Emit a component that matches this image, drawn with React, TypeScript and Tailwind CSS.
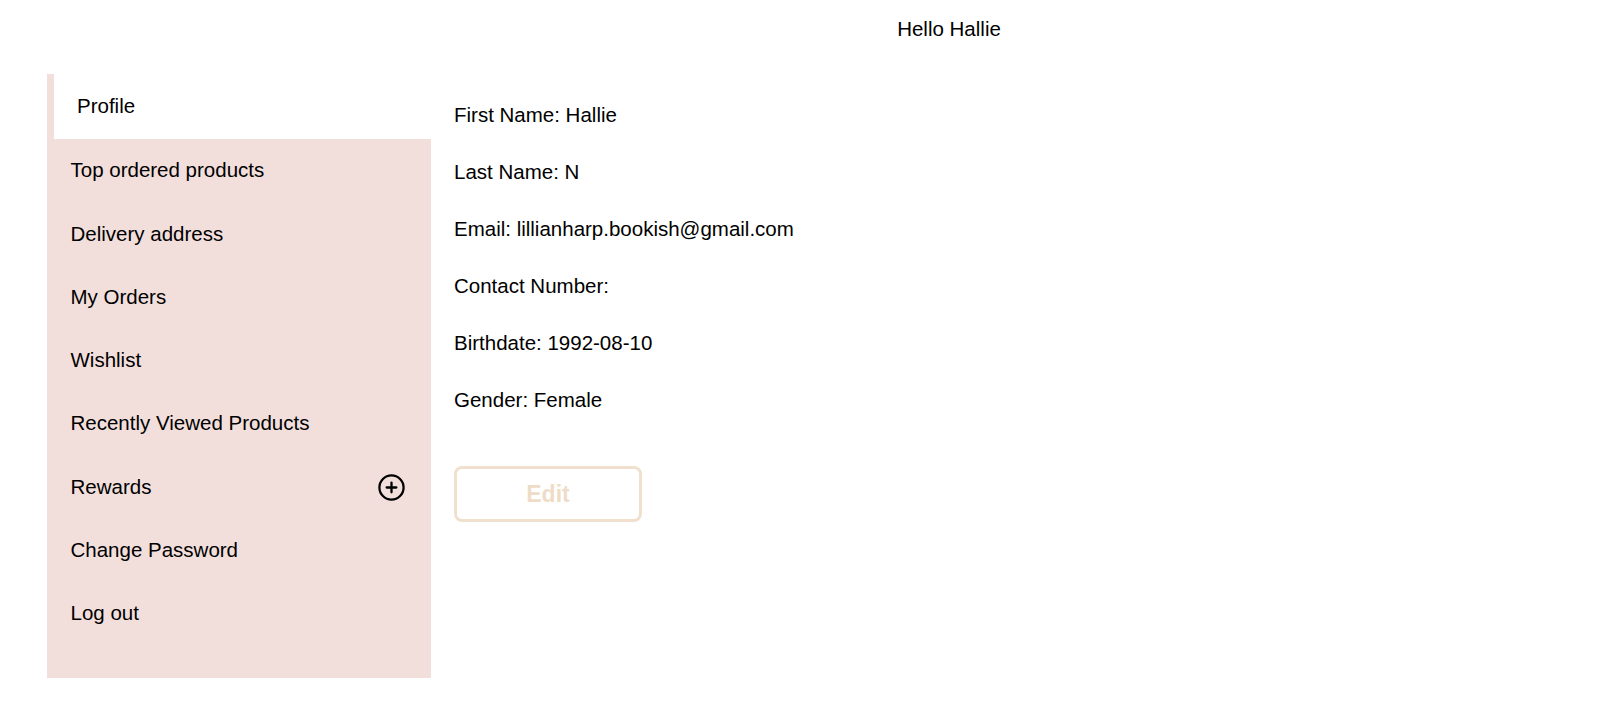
import { CirclePlus } from "lucide-react";

const menu = [
  "Top ordered products",
  "Delivery address",
  "My Orders",
  "Wishlist",
  "Recently Viewed Products",
  "Rewards",
  "Change Password",
  "Log out",
];

const details = [
  "First Name: Hallie",
  "Last Name: N",
  "Email: lillianharp.bookish@gmail.com",
  "Contact Number:",
  "Birthdate: 1992-08-10",
  "Gender: Female",
];

export default function App() {
  return (
    <div className="min-h-screen bg-white text-black font-['Liberation_Sans',Arial,sans-serif]">
      {/* Header */}
      <header className="h-[74px] pl-[298px] flex justify-center pt-[17px]">
        <p className="text-[20.5px] leading-6">Hello Hallie</p>
      </header>

      <div className="flex">
        {/* Sidebar */}
        <nav className="ml-[47px] w-[384px] bg-[#f2dfdc] pb-[33px]">
          <div className="ml-[7px] h-[65px] bg-white flex items-center pl-[23px] text-[20.5px]">
            Profile
          </div>
          {menu.map((item) => (
            <div
              key={item}
              className="h-[63.3px] flex items-center justify-between pl-[23.5px] pr-[25px] text-[20.5px]"
            >
              <span>{item}</span>
              {item === "Rewards" && (
                <CirclePlus size={29} strokeWidth={1.9} className="text-black" />
              )}
            </div>
          ))}
        </nav>

        {/* Profile details */}
        <main className="pl-[23px] pt-[12px]">
          {details.map((line) => (
            <p key={line} className="text-[20.5px] leading-[57.1px]">
              {line}
            </p>
          ))}
          <button className="mt-[37.5px] w-[188px] h-[56px] border-[3px] border-[#f1e0cd] rounded-lg text-[23px] font-bold text-[#efdcc7]">
            Edit
          </button>
        </main>
      </div>
    </div>
  );
}
